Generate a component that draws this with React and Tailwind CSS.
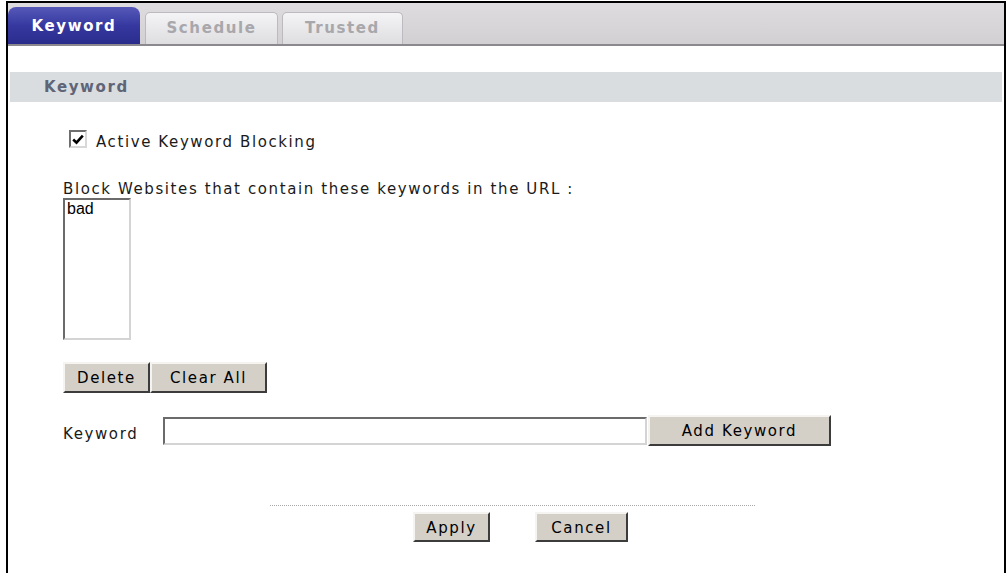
import React from "react";

function Btn({ label, w, className = "" }) {
  return (
    <button
      className={`h-full ${w} ${className} bg-[#d4d0c8] border-2 border-t-[#f5f4f1] border-l-[#f5f4f1] border-r-[#3c3c3c] border-b-[#3c3c3c] text-black text-[15px] tracking-[1.6px] flex items-center justify-center pt-[2px]`}
    >
      {label}
    </button>
  );
}

function Tab({ label, active, w, className = "" }) {
  if (active) {
    return (
      <div
        className={`${w} h-[37px] rounded-t-[8px] bg-gradient-to-b from-[#5759b8] via-[#3638a0] to-[#2a2c8c] flex items-center justify-center text-white font-bold text-[15px] tracking-[1.6px] pt-[2px] ${className}`}
      >
        {label}
      </div>
    );
  }
  return (
    <div
      className={`${w} h-[32px] rounded-t-[5px] bg-gradient-to-b from-[#f4f3f5] to-[#dedde0] border border-b-0 border-[#bcbabe] flex items-center justify-center text-[#a8a7ab] font-bold text-[15px] tracking-[1.6px] ${className}`}
    >
      {label}
    </div>
  );
}

export default function App() {
  return (
    <div className="w-[1006px] h-[573px] bg-white overflow-hidden font-['DejaVu_Sans',sans-serif]">
      <div className="ml-[6px] mt-px w-[1000px] h-[572px] border-x-2 border-t-2 border-black flex flex-col">
        <div className="h-[43px] shrink-0 bg-gradient-to-b from-[#dfdcdf] to-[#d3d0d4] border-b-2 border-[#8b898e] flex items-end">
          <Tab label="Keyword" active w="w-[132px]" />
          <Tab label="Schedule" w="w-[133px]" className="ml-[5px]" />
          <Tab label="Trusted" w="w-[121px]" className="ml-[4px]" />
        </div>

        <div className="mt-[26px] mx-[2px] h-[30px] shrink-0 bg-[#d9dde0] pl-[34px] flex items-center text-[#5f6477] font-bold text-[15px] tracking-[1.6px]">
          Keyword
        </div>

        <div className="pl-[55px] flex flex-col text-[15px] tracking-[1.6px] text-[#1a1a1a]">
          <div className="mt-[28px] h-[18px] flex items-center">
            <div className="ml-[6px] w-[18px] h-[18px] bg-white border-2 border-t-[#6e6e6e] border-l-[#6e6e6e] border-r-[#d8d8d8] border-b-[#d8d8d8] flex items-center justify-center">
              <svg width="12" height="11" viewBox="0 0 12 11">
                <path d="M1.2 5.5 L4.5 8.6 L10.8 1.6" fill="none" stroke="#000" strokeWidth="2.6" />
              </svg>
            </div>
            <span className="ml-[9px] pt-[7px]">Active Keyword Blocking</span>
          </div>

          <div className="mt-[32px] leading-[18px] h-[18px]">
            Block Websites that contain these keywords in the URL :
          </div>

          <div className="w-[68px] h-[142px] bg-white border-2 border-t-[#6b6b6b] border-l-[#6b6b6b] border-r-[#d4d4d4] border-b-[#d4d4d4] px-[2px] font-['Liberation_Sans',sans-serif] text-[16px] tracking-normal leading-[18px] text-black">
            bad
          </div>

          <div className="mt-[22px] h-[31px] flex">
            <Btn label="Delete" w="w-[87px]" />
            <Btn label="Clear All" w="w-[117px]" />
          </div>

          <div className="mt-[22px] h-[31px] flex items-center">
            <span className="w-[100px] pt-[7px]">Keyword</span>
            <div className="w-[484px] h-[28px] bg-white border-2 border-t-[#6b6b6b] border-l-[#6b6b6b] border-r-[#d4d4d4] border-b-[#d4d4d4]" />
            <Btn label="Add Keyword" w="w-[183px]" className="ml-px" />
          </div>

          <div className="mt-[59px] ml-[207px] w-[485px] border-t border-dotted border-[#a8a8a8]" />

          <div className="mt-[6px] h-[30px] flex">
            <Btn label="Apply" w="w-[77px]" className="ml-[350px]" />
            <Btn label="Cancel" w="w-[93px]" className="ml-[45px]" />
          </div>
        </div>
      </div>
    </div>
  );
}
